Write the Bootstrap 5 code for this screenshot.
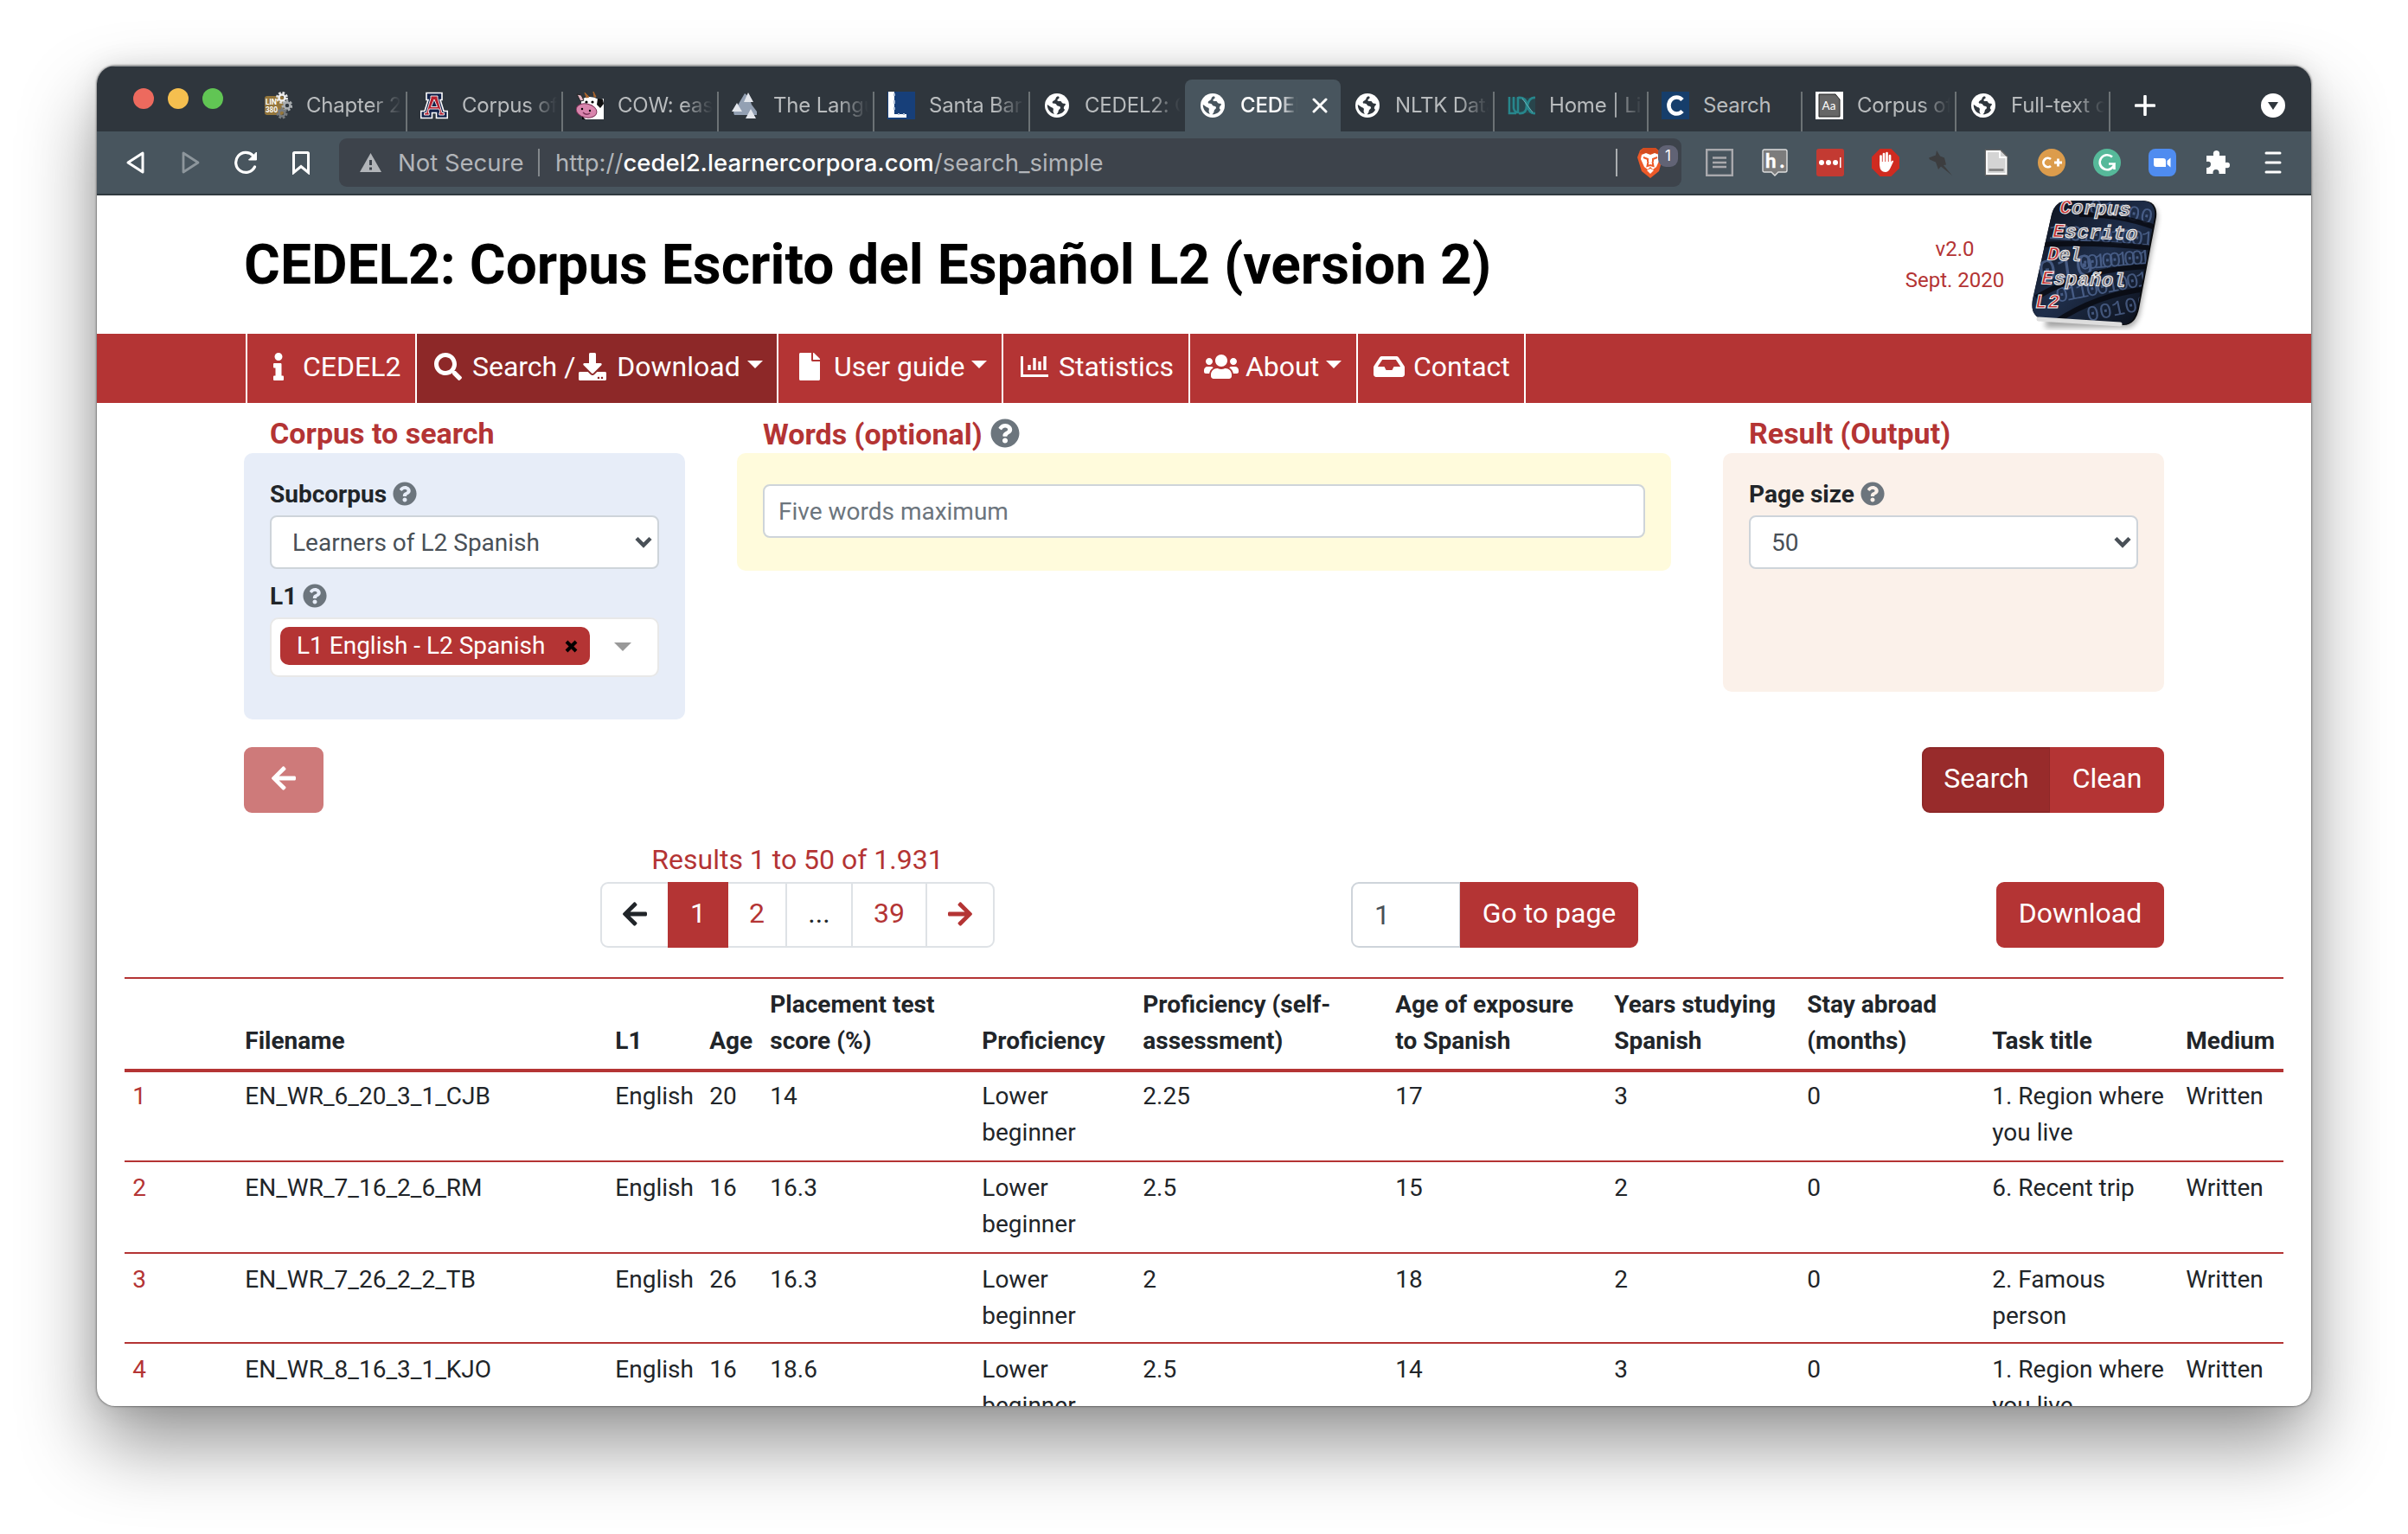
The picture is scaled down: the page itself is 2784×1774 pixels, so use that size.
<!DOCTYPE html>
<html lang="en">
<head>
<meta charset="utf-8">
<title>CEDEL2: Corpus Escrito del Español L2</title>
<meta name="viewport" content="width=device-width, initial-scale=1">
<link href="https://cdn.jsdelivr.net/npm/bootstrap@5.3.0/dist/css/bootstrap.min.css" rel="stylesheet">
<style>
:root{--brand:#b43434;--brand-dark:#8d2828}
body{background:#fff;font-family:Roboto,"Liberation Sans",sans-serif;font-size:28px;line-height:42px;color:#212529;overflow:hidden;height:1774px}
svg{display:block;flex:none}
.win{width:2560px;height:1550px;margin:76px 0 0 112px;border-radius:21px;overflow:hidden;background:#fff;box-shadow:0 0 2px 1px rgba(0,0,0,.35),0 44px 88px rgba(0,0,0,.42),0 0 30px rgba(0,0,0,.1)}
.chrome-font{font-family:Inter,"Liberation Sans",sans-serif}
.tabstrip{height:76px;background:#2f363d;border-top:1px solid #8a8f92}
.lights{padding:0 33px 0 42px;gap:16px;height:77px}
.lights i{width:24px;height:24px;border-radius:50%}
.btab{height:60px;width:180px;padding:0 5px 0 15px;position:relative;color:#b9bcbe;font-size:24px;line-height:60px}
.btab.w1{width:179px;height:46px;line-height:32px}
.btab.w2{width:178px}
.btab svg{margin-right:16px}
.btab span{flex:1 1 0;overflow:hidden;white-space:nowrap;letter-spacing:-.2px;-webkit-mask-image:linear-gradient(to right,#000 68%,transparent);mask-image:linear-gradient(to right,#000 68%,transparent)}
.btab span.nofade{-webkit-mask-image:none;mask-image:none}
.btab.sep{border-right:2px solid #6c7275;height:46px;line-height:32px;align-items:flex-start!important}
.btab.on{background:#48555e;border-radius:8px 8px 0 0;color:#fff;font-weight:500;padding-left:16px}
.btab.on span{flex:0 0 66px}
.toolbar{height:74px;background:#48555e;border-bottom:2px solid #30393f}
.navbtn{width:64px}
.url{width:1552px;height:56px;border-radius:9px;background:#3d434b;margin-left:12px;color:#b2b5b9;font-size:27.5px;line-height:56px;padding-left:24px;white-space:nowrap}
.url b{font-weight:500;color:#fff}
.vline{width:2px;height:32px;background:#83888c}
.ext{width:64px}
.site-head{height:160px;padding:0 170px}
.site-head h1{font-size:64px;line-height:76px;font-weight:700;color:#000;margin:1px 0 0}
.ver{font-size:24px;line-height:36px;color:var(--brand);width:128px}
.site-nav{height:80px;background:var(--brand);padding:0 0 0 172px}
.site-nav .nav-link{height:80px;color:#fff;font-size:32px;line-height:48px;padding:0 16px;border-right:2px solid #fff;display:flex;align-items:center;white-space:pre;padding-bottom:4px}
.site-nav .nav-link:first-child{border-left:2px solid #fff}
.site-nav .nav-link.active{background:var(--brand-dark)}
.fw{width:40px;display:flex;justify-content:center;flex:none;margin-bottom:0}
.tri{width:0;height:0;border:9.5px solid transparent;border-top-color:#fff;border-bottom:0;margin:-5px 0 0 8px}
.panels{height:398px;padding:14px 170px 0}
.ptitle{font-size:34px;line-height:43px;height:44px;font-weight:700;color:var(--brand);padding-left:30px}
.panel{border-radius:10px;padding:27px 30px 0}
.lbl{font-weight:700;height:42px}
.form-select.fld,.form-control.fld{height:62px;font-size:28px;line-height:42px;border:2px solid #ced4da;border-radius:8px;color:#495057;padding:8px 24px}
.form-control.fld{padding:8px 16px}
.form-control.fld::placeholder{color:#6c757d;opacity:1}
.form-control.fakesel{display:flex;align-items:center;background:#fff;padding:2px 6px 0 24px;margin-top:3px}
.fakesel svg{margin-top:-2px}
.multi{height:69px;border:2px solid #e8e8e8;border-radius:10px;background:#fff;padding:9px 30px 0 10px;margin-top:3px}
.chip{background:var(--brand);color:#fff;border-radius:10px;height:44px;width:358px;padding:0 14px 0 19px}
.btn.bb{--bs-btn-bg:var(--brand);--bs-btn-color:#fff;--bs-btn-border-color:var(--brand);--bs-btn-hover-bg:var(--brand-dark);--bs-btn-hover-color:#fff;font-size:32px;line-height:48px;height:76px;padding:10px 20px 14px;border-width:2px;border-radius:9px;white-space:nowrap}
.btn.bb.dk{background:#982b2b;border-color:#8d2828}
.pg .page-link{height:76px;font-size:32px;line-height:48px;padding:10px 0 0;border:2px solid #dee2e6;color:var(--brand);display:flex;justify-content:center;box-sizing:border-box}
.pg .page-item:not(:first-child) .page-link{margin-left:-2px}
.pg .page-item:first-child .page-link{border-radius:9px 0 0 9px;color:#212529}
.pg .page-item:last-child .page-link{border-radius:0 9px 9px 0}
.pg .page-item.active .page-link{background:var(--brand);border-color:var(--brand);color:#fff}
.pg svg{margin-top:9px}
.goto{width:332px}
.goto .form-control{height:76px;border:2px solid #ced4da;border-radius:9px 0 0 9px;font-size:32px;color:#495057;padding:0 25px}
.table.corpus{table-layout:fixed;width:2496px;margin:34px 0 0 32px;--bs-table-bg:transparent;border-collapse:separate;border-spacing:0;color:#212529}
.table.corpus>thead>tr>th{border:0 solid var(--brand);border-width:2px 0 4px;padding:0 0 11px 9.3px;height:110px;vertical-align:bottom;line-height:42px;white-space:nowrap;font-weight:700}
.table.corpus>tbody>tr>td{border:0 solid var(--brand);border-bottom-width:2px;padding:9px 0 0 9.3px;height:106px;vertical-align:top;white-space:nowrap}
.table.corpus>tbody>tr:first-child>td{padding-top:7px;height:104px}
.table.corpus>tbody>tr:nth-child(3)>td{height:104px}
.table.corpus>tbody>tr>td:first-child{color:var(--brand)}
</style>
</head>
<body>
<svg width="0" height="0" class="position-absolute">
<defs>
<symbol id="q" viewBox="0 0 512 512"><path fill="#6c757d" d="M504 256c0 136.997-111.043 248-248 248S8 392.997 8 256C8 119.083 119.043 8 256 8s248 111.083 248 248zM262.655 90c-54.497 0-89.255 22.957-116.549 63.758-3.536 5.286-2.353 12.415 2.715 16.258l34.699 26.31c5.205 3.947 12.621 3.008 16.665-2.122 17.864-22.658 30.113-35.797 57.303-35.797 20.429 0 45.698 13.148 45.698 32.958 0 14.976-12.363 22.667-32.534 33.976C247.128 238.528 216 254.941 216 296v4c0 6.627 5.373 12 12 12h56c6.627 0 12-5.373 12-12v-1.333c0-28.462 83.186-29.647 83.186-106.667 0-58.002-60.165-102-116.531-102zM256 338c-25.365 0-46 20.635-46 46 0 25.364 20.635 46 46 46s46-20.636 46-46c0-25.365-20.635-46-46-46z"/></symbol>
<symbol id="arr" viewBox="0 0 448 512"><path fill="currentColor" d="M257.500 445.100l-22.200 22.200c-9.400 9.400-24.600 9.400-33.900 0L7 273c-9.400-9.400-9.400-24.600 0-33.900L201.400 44.700c9.400-9.400 24.600-9.400 33.900 0l22.200 22.200c9.500 9.500 9.300 25-.4 34.300L136.600 216H424c13.300 0 24 10.700 24 24v32c0 13.300-10.700 24-24 24H136.600l120.500 114.800c9.800 9.300 10 24.800.4 34.300z"/></symbol>
<symbol id="globe" viewBox="0 0 32 32"><circle cx="16" cy="16" r="14" fill="#fff"/><path fill="var(--g,#2f363d)" d="M16.500 5.500c-2.500 1.200-1.300 3-3.200 4.200-1.500.9-2.800 1.600-2.600 3 .3 1.500 2.200.8 3.600 1.200 1.300.5 1.100 2.200 2.600 2.600 1.600.4 3 .2 3.100 2 .1 1.600-2 1.800-2.300 3.500-.2 1.700-.6 2.900-2.300 4.200 4.300.3 8-2.100 9.700-5.500-1.300-.3-1.600-2-1-3.300.5-1.200 1.600-1.500 1.900-2.700-.6-1.500-1.900-.5-3.200-1.100-1.500-.7-1.200-2.600-3-2.700-1.500-.1-2.300.5-3.200-.5-.8-1 .6-1.900 1.400-2.400.9-.6.8-1.600 0-2.500zM4.800 15c2 .8 2.700 2.400 4.500 2.900 1.900.5 3 1.400 2.500 3.200-.5 1.700-.2 2.600 1 4.800C8.200 24.700 4.600 20.500 4.800 15z"/></symbol>
<symbol id="chev" viewBox="0 0 20 14"><path d="M2 2.500l8 8 8-8" fill="none" stroke="#495057" stroke-width="4.500"/></symbol>
</defs>
</svg>
<div class="win d-flex flex-column">
  <div class="tabstrip chrome-font d-flex align-items-end flex-shrink-0">
    <div class="lights d-flex align-items-center"><i style="background:#ed6a5e"></i><i style="background:#f5bf4f"></i><i style="background:#61c554"></i></div>
    <div class="btab sep d-flex"><svg width="32" height="32" viewBox="0 0 32 32"><rect y="5" width="22" height="22" rx="3" fill="#94763c"/><g fill="none" stroke="#aaa" stroke-dasharray="2.300 1.600"><circle cx="20" cy="7" r="5" stroke="#e4e4e4" stroke-width="4"/><circle cx="26" cy="16" r="4.500" stroke="#a9adb0" stroke-width="4"/><circle cx="20" cy="25" r="4.500" stroke="#777b7e" stroke-width="4"/></g><g fill="none" stroke-width="2.500"><circle cx="20" cy="7" r="3.500" stroke="#eee"/><circle cx="26" cy="16" r="3.500" stroke="#a9adb0"/><circle cx="20" cy="25" r="3.500" stroke="#777b7e"/></g><text x="1" y="15" font-size="9" font-weight="700" fill="#fff" textLength="13" lengthAdjust="spacingAndGlyphs">LIN</text><text x="1" y="24" font-size="9" font-weight="700" fill="#fff" textLength="14" lengthAdjust="spacingAndGlyphs">380</text></svg><span>Chapter 2</span></div>
    <div class="btab sep d-flex"><svg width="32" height="32" viewBox="0 0 32 32"><path d="M7 1.500h18v8h-2l4 13h4.300v8H18.500v-6h-5v6H.7v-8H5l4-13H7z" fill="#13234b" stroke="#fff" stroke-width="1.600"/><path fill-rule="evenodd" d="M12 5h8v2.500L25 24.500h2.500V27h-5.700v-2.500h1l-1-4.500H10.200l-1 4.500h1V27H4.500v-2.500H7L12 7.500zM16 9l-3.500 8.500h7z" fill="#b5202f" stroke="#fff" stroke-width=".9"/></svg><span>Corpus of</span></div>
    <div class="btab sep d-flex"><svg width="32" height="32" viewBox="0 0 32 32"><path d="M16 14l16-6v24H8z" fill="#fff"/><path d="M6 9q10-6 20 0l-2 12-12 4-6-6z" fill="#fff"/><path d="M1 3l5 1 3 6-4 1z" fill="#e8bcc8" stroke="#222"/><path d="M10 1l2 6 3-1zM20 0l1 6 2 0z" fill="#a8642d" stroke="#a8642d"/><path d="M25 8l6 1 1 5-4 5-4-4z" fill="#111"/><ellipse cx="12" cy="22" rx="12" ry="8" fill="#d985ad" stroke="#7d3157" transform="rotate(12 12 22)"/><circle cx="12" cy="12" r="1.600"/><circle cx="19" cy="12" r="1.600"/><circle cx="7" cy="20" r="1.200"/><circle cx="16" cy="22" r="1.200"/><path d="M8 24q4 4 8 1" fill="none" stroke="#7d3157" stroke-width="1.500"/><path d="M7 29l4 3H7z"/></svg><span>COW: eas</span></div>
    <div class="btab sep d-flex"><svg width="32" height="32" viewBox="0 0 32 32"><path d="M15 2l5 4 3 9 6 8v4H3l-1-3z" fill="#93a0b3"/><path d="M19 1l6 11H14zM6 13l6 10H0zM22 20l6 11H16z" fill="#e3e6ec"/></svg><span>The Langu</span></div>
    <div class="btab sep d-flex"><svg width="32" height="32" viewBox="0 0 32 32"><rect width="32" height="32" fill="#173f79"/><path d="M1 0h7v26h14v4H1z" fill="#fff"/><path d="M8 2v3M8 10v4M8 18v3M12 26h2M18 26h2" stroke="#a9bad2" stroke-width="2"/></svg><span>Santa Bar</span></div>
    <div class="btab w1 d-flex"><svg width="32" height="32"><use href="#globe"/></svg><span>CEDEL2: C</span></div>
    <div class="btab on d-flex align-items-center"><svg width="32" height="32" style="--g:#48555e"><use href="#globe"/></svg><span>CEDEL</span><svg width="18" height="18" viewBox="0 0 18 18" style="margin:0 0 0 17px"><path d="M2 2l14 14M16 2L2 16" stroke="#fff" stroke-width="3" stroke-linecap="round"/></svg></div>
    <div class="btab w2 sep d-flex"><svg width="32" height="32"><use href="#globe"/></svg><span>NLTK Data</span></div>
    <div class="btab w2 sep d-flex"><svg width="32" height="32" viewBox="0 0 32 32"><rect x="4" y="7" width="28" height="18" fill="#28454c"/><g fill="none" stroke="#27868c" stroke-width="2.600"><path d="M2 6v19h8M7 6v13q1 5 5 5V6M12 7q10-1 10 9t-9 9M32 7q-7-1-9 9 2 10 9 9"/></g><path d="M17 8l12 16" stroke="#6db5b9"/></svg><span>Home | Li</span></div>
    <div class="btab w2 sep d-flex"><svg width="32" height="32" viewBox="0 0 32 32"><rect width="32" height="32" fill="#163e6b"/><path d="M24 9.500A9 9.500 0 1 0 24 22.500" fill="none" stroke="#fff" stroke-width="4.600"/></svg><span class="nofade">Search</span></div>
    <div class="btab w2 sep d-flex"><svg width="32" height="32" viewBox="0 0 32 32"><rect width="32" height="32" fill="#fff"/><path d="M4 3h19l5 6v20H4z" fill="#666" stroke="#222"/><text x="7.500" y="21" font-size="13.500" fill="#fff" font-family="Lato">Aa</text></svg><span>Corpus of</span></div>
    <div class="btab w2 sep d-flex"><svg width="32" height="32"><use href="#globe"/></svg><span>Full-text c</span></div>
    <svg width="24" height="24" viewBox="0 0 24 24" style="margin:0 0 18px 28px"><path d="M12 1.500v21M1.500 12h21" stroke="#fff" stroke-width="3.600" stroke-linecap="round"/></svg>
    <svg width="28" height="28" viewBox="0 0 28 28" style="margin:0 30px 16px auto"><circle cx="14" cy="14" r="14" fill="#fff"/><path d="M8 10h12l-6 9z" fill="#2f363d"/></svg>
  </div>
  <div class="toolbar chrome-font d-flex align-items-center flex-shrink-0" style="padding-left:12px">
    <div class="navbtn d-flex justify-content-center"><svg width="24" height="28" viewBox="0 0 24 28"><path d="M21 3v22L4 14z" fill="none" stroke="#fff" stroke-width="3" stroke-linejoin="round"/></svg></div>
    <div class="navbtn d-flex justify-content-center"><svg width="24" height="28" viewBox="0 0 24 28"><path d="M4 3v22l17-11z" fill="none" stroke="#8d969c" stroke-width="2.800" stroke-linejoin="round"/></svg></div>
    <div class="navbtn d-flex justify-content-center"><svg width="28" height="28" viewBox="0 0 28 28"><path d="M24.500 19A11.500 11.500 0 1 1 22.500 6" fill="none" stroke="#fff" stroke-width="3.200" stroke-linecap="round"/><path d="M26.500 2v9h-9z" fill="#fff" stroke="#fff" stroke-linejoin="round"/></svg></div>
    <div class="navbtn d-flex justify-content-center"><svg width="22" height="28" viewBox="0 0 22 28"><path d="M2.500 3.500q0-1 1-1h15q1 0 1 1v22L11 18.500l-8.500 7z" fill="none" stroke="#fff" stroke-width="3"/></svg></div>
    <div class="url d-flex align-items-center">
      <svg width="25" height="24" viewBox="0 0 25 24"><path d="M12.500 1L25 23H0z" fill="#b2b5b9"/><path d="M12.500 9v6M12.500 17.500v3" stroke="#3d434b" stroke-width="3"/></svg>
      <span style="margin-left:19px;width:162px">Not Secure</span><div class="vline"></div>
      <span style="margin-left:18px;letter-spacing:.03px">http://<b>cedel2.learnercorpora.com</b>/search_simple</span>
      <div class="vline ms-auto" style="background:#aaadb0"></div>
      <div class="d-flex position-relative" style="margin:0 18px 0 22px;width:34px">
        <svg width="32" height="38" viewBox="0 0 32 38"><path d="M8 2h14l6 5 2 8-4 14-10 8L6 29 1 13l3-8z" fill="#ed5a29"/><path d="M8 2h14l4 5-3 2H8L3 8z" fill="#d44c1f"/><path d="M6 10l5-2 5 2 5-2 5 2 1 5-4 9-4 3-3-3-3 3-4-3-4-9zM12 28l4-2 4 2-4 4z" fill="#fff"/><path d="M8 13l5 2v3M24 13l-5 2v3M13.500 18l-1 5 3.500-1 3.500 1-1-5" fill="none" stroke="#ed5a29" stroke-width="2"/></svg>
        <span class="position-absolute text-center text-white" style="left:25px;top:-1px;width:23px;height:25px;line-height:25px;font-size:17px;border-radius:9px;background:#616375">1</span>
      </div>
    </div>
    <div class="d-flex align-items-center" style="margin-left:12px">
      <div class="ext d-flex justify-content-center"><svg width="32" height="32" viewBox="0 0 32 32"><rect x="1.200" y="1.200" width="29.600" height="29.600" fill="none" stroke="#a9a9ad" stroke-width="2.400"/><path d="M8 10.500h16M8 16h16M8 21h16" stroke="#a9a9ad" stroke-width="2.400"/></svg></div>
      <div class="ext d-flex justify-content-center"><svg width="30" height="32" viewBox="0 0 30 32"><path d="M3 1h24q2 0 2 2v22q0 2-2 2h-8l-4 4-4-4H3q-2 0-2-2V3q0-2 2-2z" fill="#7c7c7c" stroke="#ddd" stroke-width="1.400"/><text x="4" y="22" font-size="22" font-weight="700" font-family="Lato" fill="#fff" stroke="#fff" stroke-width=".6" textLength="22">h.</text></svg></div>
      <div class="ext d-flex justify-content-center"><svg width="32" height="32" viewBox="0 0 32 32"><rect width="32" height="32" rx="3" fill="#c33a32"/><g fill="#fff"><circle cx="6" cy="16" r="3"/><circle cx="14" cy="16" r="3"/><circle cx="22" cy="16" r="3"/><rect x="27" y="10" width="1.500" height="12"/></g></svg></div>
      <div class="ext d-flex justify-content-center"><svg width="32" height="32" viewBox="0 0 32 32"><path d="M9.500 0h13L32 9.500v13L22.500 32h-13L0 22.500v-13z" fill="#cf2b20"/><path d="M10.500 8.500v10M14 6v10M17.500 5v11M21 8v11" stroke="#fff" stroke-width="2.700" stroke-linecap="round"/><path d="M9.200 15h13.200l1.800-1.500 1 1-4 8.500q-2 4-5.500 4-6 0-6.500-7z" fill="#fff"/></svg></div>
      <div class="ext d-flex justify-content-center"><svg width="30" height="30" viewBox="0 0 30 30"><path d="M10 1l4 6.500 5 2 2 8-3 .5 10 12L15 19.500l-3 3.500-3-8.500-7-3L1 9.500l8-3z" fill="#3c3d3f"/></svg></div>
      <div class="ext d-flex justify-content-center"><svg width="28" height="32" viewBox="0 0 28 32"><path d="M1.500 1.500H19L26.500 9v21.500h-25z" fill="#d4d4d4" stroke="#666" stroke-width="1.400"/><path d="M3 3h15v7h7.500v19H3z" fill="none" stroke="#fff" stroke-width="1.800"/><rect x="5.500" y="23" width="17" height="3" fill="#888"/></svg></div>
      <div class="ext d-flex justify-content-center"><svg width="32" height="32" viewBox="0 0 32 32"><circle cx="16" cy="16" r="16" fill="#dc9c4c"/><path d="M15 12a5.200 5.200 0 1 0 0 8M19 16h9M23.500 11.500v9" fill="none" stroke="#fff" stroke-width="2.800"/></svg></div>
      <div class="ext d-flex justify-content-center"><svg width="32" height="32" viewBox="0 0 32 32"><circle cx="16" cy="16" r="16" fill="#56b99a"/><path d="M22 9.500A8.500 8.500 0 1 0 24.500 17.500H18M24.500 17v7" fill="none" stroke="#fff" stroke-width="2.600"/></svg></div>
      <div class="ext d-flex justify-content-center"><svg width="32" height="32" viewBox="0 0 32 32"><rect width="32" height="32" rx="8" fill="#4f8cf0"/><path d="M6 11h11q3 0 3 3v7H9q-3 0-3-3zM21.500 14l4-3.500v11l-4-3.500z" fill="#fff"/></svg></div>
      <div class="ext d-flex justify-content-center"><svg width="30" height="30" viewBox="0 0 30 30"><path d="M2 7h8q-1-6 3.500-6T17 7h7v8q5-1 5 3t-5 3v7h-7.500q.5-5-3.500-5t-3.500 5H2v-7q5 0 5-4t-5-3z" fill="#fff"/></svg></div>
      <div class="ext d-flex justify-content-center"><svg width="20" height="28" viewBox="0 0 20 28"><path d="M2 3h16M2 14h16M2 25h16" stroke="#fff" stroke-width="3" stroke-linecap="round"/></svg></div>
    </div>
  </div>

  <header class="site-head d-flex align-items-center flex-shrink-0">
    <h1>CEDEL2: Corpus Escrito del Español L2 (version 2)</h1>
    <div class="ver text-center ms-auto text-nowrap">v2.0<br>Sept. 2020</div>
    <svg width="156" height="156" viewBox="0 0 156 156" style="margin:0 2px 0 20px;align-self:flex-start">
      <defs><linearGradient id="bk" x2="1" y2="1"><stop offset="0" stop-color="#0b0f18"/><stop offset=".5" stop-color="#1f2e4a"/><stop offset="1" stop-color="#07090f"/></linearGradient><clipPath id="bc"><path d="M48 6h84q17 1 15 19l-20 106q-4 18-16 18l-94-7q-14-2-11-22L28 22Q32 6 48 6z"/></clipPath><filter id="bl" x="-20%" y="-20%" width="140%" height="140%"><feGaussianBlur stdDeviation="3"/></filter></defs>
      <path d="M50 10h86q16 1 14 19l-20 106q-4 18-16 18H20z" fill="#000" opacity=".35" filter="url(#bl)"/>
      <path d="M48 6h86q17 1 15 19l-20 106q-4 19-18 19l-94-7q-14-4-11-22L28 22Q32 6 48 6z" fill="#0a0b0e"/>
      <g clip-path="url(#bc)"><rect width="156" height="156" fill="url(#bk)"/><g font-family="Liberation Mono" fill="#6a86bb" opacity=".55" font-size="25"><text x="70" y="20" transform="rotate(10 70 20)">01100100</text><text x="24" y="50" textLength="122" transform="rotate(4 24 50)">1101001001</text><text x="60" y="86" textLength="84" transform="rotate(-5 60 86)">001001001</text><text x="14" y="100" font-size="36" transform="rotate(-8 14 100)">010</text><text x="34" y="124" textLength="110" transform="rotate(-11 34 124)">011001001</text><text x="70" y="146" transform="rotate(-12 70 146)">0010010</text></g><path d="M0 58q70-6 156 4M10 118q60-36 140-36M30 148q50-34 110-40M60 22q50 0 90 16" fill="none" stroke="#07090f" stroke-width="6" opacity=".8"/></g>
      <path d="M13 143q50 3 94 6" stroke="#ddd" stroke-width="5" stroke-linecap="round" fill="none"/>
      <g font-family="Liberation Mono" font-style="italic" font-weight="700" font-size="22.500" fill="#77737a" stroke="#f2f2f2" stroke-width="1"><text x="37" y="20.500" textLength="82" transform="rotate(2 37 21)"><tspan fill="#c22c2c">C</tspan>orpus</text><text x="29" y="48" textLength="98" transform="rotate(2 29 48)"><tspan fill="#c22c2c">E</tspan>scrito</text><text x="23" y="74.500" textLength="39" transform="rotate(2 23 75)"><tspan fill="#c22c2c">D</tspan>el</text><text x="16" y="102.300" textLength="97" transform="rotate(2 16 102)"><tspan fill="#c22c2c">E</tspan>spañol</text><text x="9" y="129.500" textLength="28" fill="#c22c2c">L2</text></g>
    </svg>
  </header>

  <nav class="site-nav nav flex-nowrap flex-shrink-0">
    <a class="nav-link" style="width:198px"><span class="fw"><svg width="12" height="32" viewBox="0 0 192 512"><path fill="#fff" d="M20 424.229h20V279.771H20c-11.046 0-20-8.954-20-20V212c0-11.046 8.954-20 20-20h112c11.046 0 20 8.954 20 20v212.229h20c11.046 0 20 8.954 20 20V492c0 11.046-8.954 20-20 20H20c-11.046 0-20-8.954-20-20v-47.771c0-11.046 8.954-20 20-20zM96 0C56.235 0 24 32.235 24 72s32.235 72 72 72 72-32.235 72-72S135.764 0 96 0z"/></svg></span> CEDEL2</a>
    <a class="nav-link active" style="width:418px"><span class="fw"><svg width="32" height="32" viewBox="0 0 512 512"><path fill="#fff" d="M505 442.700L405.300 343c-4.500-4.500-10.600-7-17-7H372c27.600-35.300 44-79.700 44-128C416 93.100 322.900 0 208 0S0 93.100 0 208s93.100 208 208 208c48.300 0 92.700-16.400 128-44v16.300c0 6.400 2.500 12.500 7 17l99.700 99.700c9.400 9.400 24.600 9.400 33.900 0l28.300-28.300c9.400-9.400 9.400-24.600.1-34zM208 336c-70.700 0-128-57.200-128-128 0-70.700 57.200-128 128-128 70.700 0 128 57.200 128 128 0 70.700-57.200 128-128 128z"/></svg></span> Search /<span class="fw"><svg width="32" height="32" viewBox="0 0 512 512"><path fill="#fff" d="M216 0h80c13.300 0 24 10.700 24 24v168h87.700c17.800 0 26.700 21.500 14.100 34.100L269.700 378.300c-7.500 7.500-19.800 7.500-27.300 0L90.100 226.100c-12.600-12.600-3.700-34.100 14.100-34.100H192V24c0-13.300 10.700-24 24-24zm296 376v112c0 13.300-10.700 24-24 24H24c-13.300 0-24-10.700-24-24V376c0-13.300 10.700-24 24-24h146.700l49 49c20.100 20.100 52.500 20.100 72.600 0l49-49H488c13.300 0 24 10.700 24 24zm-124 88c0-11-9-20-20-20s-20 9-20 20 9 20 20 20 20-9 20-20zm64 0c0-11-9-20-20-20s-20 9-20 20 9 20 20 20 20-9 20-20z"/></svg></span> Download<span class="tri"></span></a>
    <a class="nav-link" style="width:260px"><span class="fw"><svg width="24" height="32" viewBox="0 0 384 512"><path fill="#fff" d="M224 136V0H24C10.700 0 0 10.700 0 24v464c0 13.300 10.700 24 24 24h336c13.300 0 24-10.700 24-24V160H248c-13.200 0-24-10.800-24-24zm160-14.100v6.100H256V0h6.100c6.400 0 12.500 2.500 17 7l97.900 98c4.500 4.500 7 10.600 7 16.900z"/></svg></span> User guide<span class="tri"></span></a>
    <a class="nav-link" style="width:216px"><span class="fw"><svg width="32" height="24" viewBox="0 0 32 24"><path d="M1.500 0v22.500H32" fill="none" stroke="#fff" stroke-width="3"/><path d="M10 10v6M16 2v14M22 6v10M28 0v16" stroke="#fff" stroke-width="3.400"/></svg></span> Statistics</a>
    <a class="nav-link" style="width:194px"><span class="fw"><svg width="40" height="32" viewBox="0 0 640 512"><path fill="#fff" d="M96 224c35.300 0 64-28.700 64-64s-28.700-64-64-64-64 28.700-64 64 28.700 64 64 64zm448 0c35.300 0 64-28.700 64-64s-28.700-64-64-64-64 28.700-64 64 28.700 64 64 64zm32 32h-64c-17.600 0-33.500 7.100-45.100 18.600 40.300 22.100 68.900 62 75.100 109.400h66c17.700 0 32-14.300 32-32v-32c0-35.300-28.700-64-64-64zm-256 0c61.900 0 112-50.100 112-112S381.900 32 320 32 208 82.100 208 144s50.100 112 112 112zm76.800 32h-8.300c-20.800 10-43.900 16-68.500 16s-47.600-6-68.500-16h-8.300C179.600 288 128 339.600 128 403.200V432c0 26.500 21.500 48 48 48h288c26.500 0 48-21.500 48-48v-28.800c0-63.600-51.600-115.200-115.200-115.200zm-223.700-13.400C161.500 263.100 145.600 256 128 256H64c-35.300 0-64 28.700-64 64v32c0 17.700 14.300 32 32 32h65.900c6.300-47.400 34.900-87.300 75.200-109.400z"/></svg></span> About<span class="tri"></span></a>
    <a class="nav-link" style="width:194px"><span class="fw"><svg width="36" height="32" viewBox="0 0 576 512"><path fill="#fff" d="M567.938 243.908L462.250 85.374A48.003 48.003 0 0 0 422.311 64H153.689a48 48 0 0 0-39.938 21.374L8.062 243.908A47.994 47.994 0 0 0 0 270.533V400c0 26.510 21.490 48 48 48h480c26.510 0 48-21.490 48-48V270.533a47.994 47.994 0 0 0-8.062-26.625zM162.252 128h251.497l85.333 128H376l-32 64H232l-32-64H76.918l85.334-128z"/></svg></span> Contact</a>
  </nav>

  <section class="panels d-flex align-items-start flex-shrink-0">
    <div style="width:510px">
      <div class="ptitle">Corpus to search</div>
      <div class="panel" style="background:#e7edf8;height:308px">
        <div class="lbl d-flex align-items-center">Subcorpus<svg width="28" height="28" style="margin:-2px 0 0 7px"><use href="#q"/></svg></div>
        <div class="form-control fld fakesel d-flex justify-content-between">Learners of L2 Spanish<svg width="20" height="14"><use href="#chev"/></svg></div>
        <div class="lbl d-flex align-items-center" style="margin-top:11px">L1<svg width="28" height="28" style="margin:-2px 0 0 7px"><use href="#q"/></svg></div>
        <div class="multi d-flex"><div class="chip d-flex align-items-center justify-content-between">L1 English - L2 Spanish<svg width="15" height="15" viewBox="0 0 15 15"><path d="M2 2l11 11M13 2L2 13" stroke="#000" stroke-width="4"/></svg></div><svg class="ms-auto" width="20" height="10" viewBox="0 0 20 10" style="margin-top:18px"><path d="M0 0h20L10 10z" fill="#999"/></svg></div>
      </div>
    </div>
    <div style="width:1080px;margin-left:60px">
      <div class="ptitle d-flex align-items-center">Words (optional)<svg width="34" height="34" style="margin:-2px 0 0 9px"><use href="#q"/></svg></div>
      <div class="panel" style="background:#fffbdc;height:136px;padding-top:36px"><input class="form-control fld" placeholder="Five words maximum"></div>
    </div>
    <div style="width:510px;margin-left:60px">
      <div class="ptitle">Result (Output)</div>
      <div class="panel" style="background:#fbf1ea;height:276px">
        <div class="lbl d-flex align-items-center">Page size<svg width="28" height="28" style="margin:-2px 0 0 7px"><use href="#q"/></svg></div>
        <div class="form-control fld fakesel d-flex justify-content-between">50<svg width="20" height="14"><use href="#chev"/></svg></div>
      </div>
    </div>
  </section>

  <div class="d-flex justify-content-between flex-shrink-0" style="padding:0 170px">
    <button class="btn bb d-flex align-items-center" style="width:92px;padding:0 0 4px 30px;opacity:.65"><svg width="28" height="32"><use href="#arr"/></svg></button>
    <div class="btn-group"><button class="btn bb dk" style="width:149px">Search</button><button class="btn bb" style="width:132px">Clean</button></div>
  </div>

  <div class="d-flex align-items-end flex-shrink-0" style="padding:30px 170px 0 582px">
    <div style="width:456px">
      <div class="text-center" style="font-size:32px;line-height:48px;height:50px;color:var(--brand)">Results 1 to 50 of 1.931</div>
      <ul class="pagination pg mb-0">
        <li class="page-item"><a class="page-link" style="width:80px"><svg width="28" height="32"><use href="#arr"/></svg></a></li>
        <li class="page-item active"><a class="page-link" style="width:70px">1</a></li>
        <li class="page-item"><a class="page-link" style="width:70px">2</a></li>
        <li class="page-item"><a class="page-link" style="width:78px;color:#212529">...</a></li>
        <li class="page-item"><a class="page-link" style="width:88px">39</a></li>
        <li class="page-item"><a class="page-link" style="width:80px"><svg width="28" height="32" style="transform:scaleX(-1)"><use href="#arr"/></svg></a></li>
      </ul>
    </div>
    <div class="goto input-group flex-nowrap" style="margin-left:412px"><input class="form-control" value="1"><button class="btn bb" style="width:206px;flex:none">Go to page</button></div>
    <button class="btn bb ms-auto" style="width:194px">Download</button>
  </div>

  <table class="table corpus flex-shrink-0">
    <colgroup><col style="width:130px"><col style="width:428px"><col style="width:109px"><col style="width:70px"><col style="width:245px"><col style="width:186px"><col style="width:292px"><col style="width:253px"><col style="width:223px"><col style="width:214px"><col style="width:224px"><col style="width:122px"></colgroup>
    <thead><tr><th></th><th>Filename</th><th>L1</th><th>Age</th><th>Placement test<br>score (%)</th><th>Proficiency</th><th>Proficiency (self-<br>assessment)</th><th>Age of exposure<br>to Spanish</th><th>Years studying<br>Spanish</th><th>Stay abroad<br>(months)</th><th>Task title</th><th>Medium</th></tr></thead>
    <tbody>
      <tr><td>1</td><td>EN_WR_6_20_3_1_CJB</td><td>English</td><td>20</td><td>14</td><td>Lower<br>beginner</td><td>2.25</td><td>17</td><td>3</td><td>0</td><td>1. Region where<br>you live</td><td>Written</td></tr>
      <tr><td>2</td><td>EN_WR_7_16_2_6_RM</td><td>English</td><td>16</td><td>16.3</td><td>Lower<br>beginner</td><td>2.5</td><td>15</td><td>2</td><td>0</td><td>6. Recent trip</td><td>Written</td></tr>
      <tr><td>3</td><td>EN_WR_7_26_2_2_TB</td><td>English</td><td>26</td><td>16.3</td><td>Lower<br>beginner</td><td>2</td><td>18</td><td>2</td><td>0</td><td>2. Famous<br>person</td><td>Written</td></tr>
      <tr><td>4</td><td>EN_WR_8_16_3_1_KJO</td><td>English</td><td>16</td><td>18.6</td><td>Lower<br>beginner</td><td>2.5</td><td>14</td><td>3</td><td>0</td><td>1. Region where<br>you live</td><td>Written</td></tr>
    </tbody>
  </table>
</div>
<script src="https://cdn.jsdelivr.net/npm/bootstrap@5.3.0/dist/js/bootstrap.bundle.min.js"></script>
</body>
</html>
